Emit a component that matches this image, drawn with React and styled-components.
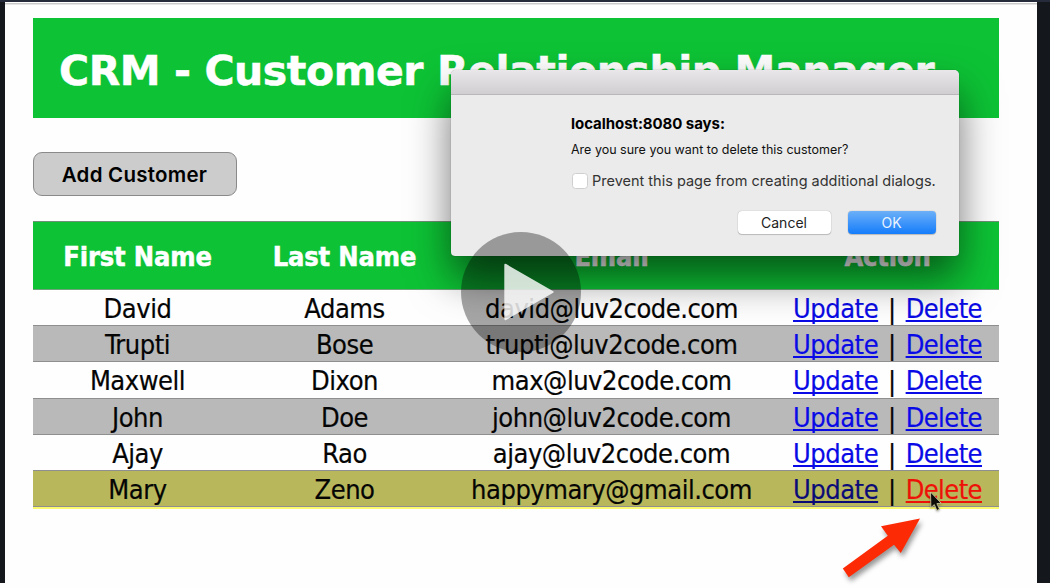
import React from "react";
import styled, { createGlobalStyle } from "styled-components";

const GlobalStyle = createGlobalStyle`
  *, *::before, *::after { box-sizing: border-box; }
  body { margin: 0; background: #fff; overflow: hidden; }
`;

const tableFont = `"DejaVu Sans Condensed", "DejaVu Sans", sans-serif`;
const systemFont = `Inter, "Liberation Sans", sans-serif`;

const Stage = styled.div`
  position: relative;
  width: 1050px;
  height: 588px;
  background: #fefefe;
`;

const Player = styled.div`
  height: 583px;
  padding: 2px 13px 0 5px;
  background: linear-gradient(#262b3b 2px, #14181d 2px);
`;

const Page = styled.main`
  height: 581px;
  padding: 16px 38px 0 28px;
  background: linear-gradient(#fff 1px, #c9c9c9 1px, #c9c9c9 2px, #e6e6e6 2px, #e6e6e6 3px, #fefefe 3px);
`;

const Banner = styled.header`
  display: flex;
  align-items: center;
  height: 100px;
  padding: 6px 0 0 26px;
  background: #0dc335;
`;

const Title = styled.h1`
  margin: 0;
  color: #fff;
  font: 700 41px/48px "DejaVu Sans", sans-serif;
  letter-spacing: -0.44px;
  white-space: nowrap;
  -webkit-text-stroke: 0.5px #fff;
`;

const AddButton = styled.button`
  display: block;
  width: 204px;
  height: 44px;
  margin: 34px 0 25px;
  padding: 1px 1px 0 0;
  border: 1.5px solid #8a8a8a;
  border-radius: 9px;
  background: #cccccc;
  color: #000;
  font: 600 20.5px/24px ${systemFont};
  letter-spacing: 0.25px;
`;

const Table = styled.section`
  display: flex;
  flex-direction: column;
  font-family: ${tableFont};
  font-size: 27px;
`;

const Row = styled.div`
  display: grid;
  grid-template-columns: 209px 205px 329px 1fr;
  align-items: center;
  justify-items: center;
  height: 36.2px;
  padding-top: 3px;
  border-bottom: 1px solid #8f8f8f;
  background: ${(p) => (p.$hovered ? "#b9b75c" : p.$striped ? "#b9b9b9" : "transparent")};
  box-shadow: ${(p) => (p.$hovered ? "0 2px 0 #fcfb6e" : "none")};
`;

const HeadRow = styled(Row)`
  height: 69px;
  padding-top: 2px;
  border-top: 1px solid #6f8f76;
  border-bottom-color: #6fa47b;
  background: #0dc335;
`;

const HeadCell = styled.div`
  color: #fff;
  font-weight: 700;
  line-height: 32px;
  letter-spacing: -0.15px;
  -webkit-text-stroke: 0.5px #fff;
`;

const Cell = styled.div`
  color: #050505;
  line-height: 32px;
  letter-spacing: -0.47px;
  white-space: nowrap;
  -webkit-text-stroke: 0.2px currentColor;
`;

const Actions = styled(Cell)`
  display: flex;
`;

const Separator = styled.span`
  width: 27.5px;
  text-align: center;
`;

const ActionLink = styled.a`
  color: ${(p) => (p.$tone === "active" ? "#ee1108" : p.$tone === "visited" ? "#0b0b78" : "#0a0ae6")};
  letter-spacing: ${(p) => (p.$tight ? "-0.58px" : "-0.48px")};
  text-decoration: underline;
  text-decoration-thickness: 2px;
  text-decoration-skip-ink: none;
  text-underline-offset: 2px;
`;

const Dialog = styled.div`
  position: absolute;
  left: 451px;
  top: 70px;
  width: 508px;
  height: 186px;
  border-radius: 5px 5px 4px 4px;
  background: #ebebeb;
  box-shadow: 0 0 1px rgba(0, 0, 0, 0.5), 0 22px 42px rgba(0, 0, 0, 0.55);
  font-family: ${systemFont};
`;

const TitleBar = styled.div`
  height: 25px;
  border-bottom: 1px solid #b9b7b9;
  border-radius: 5px 5px 0 0;
  background: linear-gradient(#e9e7e9, #d0ced1);
`;

const DialogBody = styled.div`
  display: flex;
  flex-direction: column;
  padding: 19px 23px 0 120px;
`;

const DialogTitle = styled.strong`
  color: #000;
  font-size: 15px;
  font-weight: 700;
  line-height: 20px;
  letter-spacing: -0.06px;
`;

const Question = styled.span`
  margin-top: 8px;
  color: #111;
  font-size: 12.5px;
  line-height: 16px;
`;

const Prevent = styled.label`
  display: flex;
  align-items: center;
  gap: 4px;
  margin-top: 13px;
  color: #333;
  font-size: 14.5px;
  line-height: 20px;
  white-space: nowrap;
`;

const CheckBox = styled.span`
  flex: none;
  width: 16px;
  height: 16px;
  margin-left: 1px;
  border: 1px solid #cfcfcf;
  border-radius: 3.5px;
  background: #fff;
`;

const ButtonRow = styled.div`
  display: flex;
  justify-content: flex-end;
  gap: 17px;
  margin-top: 20px;
`;

const DialogButton = styled.button`
  width: ${(p) => (p.$primary ? "88px" : "93px")};
  height: 23px;
  padding: 0 1px 0 0;
  border: 0;
  border-radius: 4px;
  background: ${(p) => (p.$primary ? "linear-gradient(#6cb0f8, #147cfb)" : "#fff")};
  box-shadow: 0 0 1px rgba(0, 0, 0, 0.4), 0 1px 1px rgba(0, 0, 0, 0.18);
  color: ${(p) => (p.$primary ? "#e9f3ff" : "#222")};
  font: 400 14px/23px ${systemFont};
`;

const PlayOverlay = styled.svg`
  position: absolute;
  left: 461px;
  top: 232px;
`;

const RedArrow = styled.svg`
  position: absolute;
  left: 836px;
  top: 512px;
  filter: drop-shadow(2px 4px 2.5px rgba(0, 0, 0, 0.4));
`;

const Cursor = styled.svg`
  position: absolute;
  left: 928px;
  top: 489px;
  filter: drop-shadow(0 1px 1px rgba(0, 0, 0, 0.35));
`;

const customers = [
  ["David", "Adams", "david@luv2code.com"],
  ["Trupti", "Bose", "trupti@luv2code.com"],
  ["Maxwell", "Dixon", "max@luv2code.com"],
  ["John", "Doe", "john@luv2code.com"],
  ["Ajay", "Rao", "ajay@luv2code.com"],
  ["Mary", "Zeno", "happymary@gmail.com"],
];

function CustomerRow({ customer, striped, hovered }) {
  const [first, last, email] = customer;
  return (
    <Row $striped={striped} $hovered={hovered}>
      <Cell>{first}</Cell>
      <Cell>{last}</Cell>
      <Cell>{email}</Cell>
      <Actions>
        <ActionLink $tone={hovered ? "visited" : "link"}>Update</ActionLink>
        <Separator>|</Separator>
        <ActionLink $tight $tone={hovered ? "active" : "link"}>Delete</ActionLink>
      </Actions>
    </Row>
  );
}

export default function App() {
  return (
    <Stage>
      <GlobalStyle />
      <Player>
        <Page>
          <Banner>
            <Title>CRM - Customer Relationship Manager</Title>
          </Banner>
          <AddButton>Add Customer</AddButton>
          <Table>
            <HeadRow>
              <HeadCell>First Name</HeadCell>
              <HeadCell>Last Name</HeadCell>
              <HeadCell>Email</HeadCell>
              <HeadCell>Action</HeadCell>
            </HeadRow>
            {customers.map((customer, i) => (
              <CustomerRow
                key={customer[2]}
                customer={customer}
                striped={i % 2 === 1}
                hovered={i === customers.length - 1}
              />
            ))}
          </Table>
        </Page>
      </Player>

      <Dialog role="dialog">
        <TitleBar />
        <DialogBody>
          <DialogTitle>localhost:8080 says:</DialogTitle>
          <Question>Are you sure you want to delete this customer?</Question>
          <Prevent>
            <CheckBox />
            Prevent this page from creating additional dialogs.
          </Prevent>
          <ButtonRow>
            <DialogButton>Cancel</DialogButton>
            <DialogButton $primary>OK</DialogButton>
          </ButtonRow>
        </DialogBody>
      </Dialog>

      <PlayOverlay width="120" height="120" viewBox="0 0 120 120">
        <circle cx="60" cy="60" r="60" fill="#000" fillOpacity="0.35" />
        <path
          d="M43.3 33.2Q43.3 31 45.2 32.1L91.8 58.9Q93.7 60 91.8 61.1L45.2 87.9Q43.3 89 43.3 86.8Z"
          fill="#fff"
          fillOpacity="0.82"
        />
      </PlayOverlay>

      <RedArrow width="100" height="76" viewBox="0 0 100 76">
        <path d="M84 6.6L45 14.2L51.8 23.8L6.8 56.6L12.8 65.3L58 32.7L64.8 41Z" fill="#fd2b05" />
      </RedArrow>

      <Cursor width="18" height="26" viewBox="0 0 18 26">
        <path
          d="M2.5 3L2.9 18.6L6.3 15.6L8.9 21.4L11.5 20.2L8.9 14.6L13.2 14.2Z"
          fill="#0c0c08"
          stroke="#d8d6a8"
          strokeWidth="0.8"
        />
      </Cursor>
    </Stage>
  );
}
